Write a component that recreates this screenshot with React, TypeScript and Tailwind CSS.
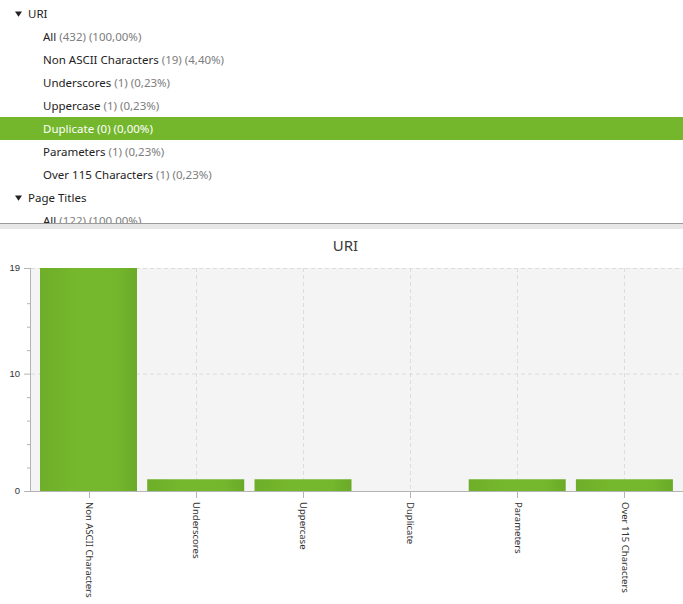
import React from "react";

const rows: { name: string; rest: string; sel?: boolean }[] = [
  { name: "All", rest: " (432) (100,00%)" },
  { name: "Non ASCII Characters", rest: " (19) (4,40%)" },
  { name: "Underscores", rest: " (1) (0,23%)" },
  { name: "Uppercase", rest: " (1) (0,23%)" },
  { name: "Duplicate", rest: " (0) (0,00%)", sel: true },
  { name: "Parameters", rest: " (1) (0,23%)" },
  { name: "Over 115 Characters", rest: " (1) (0,23%)" },
];

const cats = [
  { label: "Non ASCII Characters", v: 19 },
  { label: "Underscores", v: 1 },
  { label: "Uppercase", v: 1 },
  { label: "Duplicate", v: 0 },
  { label: "Parameters", v: 1 },
  { label: "Over 115 Characters", v: 1 },
];

function Group({ title }: { title: string }) {
  return (
    <div className="flex h-[23px] items-center pl-[15px] text-[#222]">
      <svg width="7" height="6" viewBox="0 0 7 6" className="mr-[6px]">
        <path d="M0 0.5 L7 0.5 L3.5 5.8 Z" fill="#222" />
      </svg>
      <span>{title}</span>
    </div>
  );
}

export default function App() {
  const top = 7;
  const bottom = 230;
  const unit = (bottom - top) / 19;
  const y = (v: number) => bottom - v * unit;
  const centers = [88.5, 195.7, 303, 410, 517.2, 624.4];
  const minor = [2, 4, 6, 8, 12, 14, 16];
  return (
    <div
      className="w-[683px] h-[604px] bg-white overflow-hidden flex flex-col"
      style={{ fontFamily: '"Noto Sans", "Open Sans", sans-serif' }}
    >
      <div className="h-[223px] overflow-hidden pt-[2px] text-[11.5px] leading-none">
        <Group title="URI" />
        {rows.map((r) => (
          <div
            key={r.name}
            className={
              "flex h-[23px] items-center pl-[43px] whitespace-pre " +
              (r.sel ? "bg-[#74b72d] text-white" : "text-[#222]")
            }
          >
            <span>{r.name}</span>
            <span className={r.sel ? "text-white" : "text-[#7d7d7d]"}>{r.rest}</span>
          </div>
        ))}
        <Group title="Page Titles" />
        <div className="flex h-[23px] items-center pl-[43px] whitespace-pre text-[#222]">
          <span>All</span>
          <span className="text-[#7d7d7d]"> (122) (100,00%)</span>
        </div>
      </div>
      <div className="h-[6px] border-t border-[#9a9a9a] bg-[#e6e6e6]" />
      <div className="flex-1 flex flex-col">
        <div className="h-[32px] flex items-center justify-center pl-[8px] text-[15px] text-[#3a3a3a]">
          URI
        </div>
        <svg width="683" height="343" className="block">
          <defs>
            <linearGradient id="barg" x1="0" x2="1" y1="0" y2="0">
              <stop offset="0" stopColor="#6eae29" />
              <stop offset="0.4" stopColor="#76b82d" />
              <stop offset="0.8" stopColor="#74b62c" />
              <stop offset="1" stopColor="#6aaa28" />
            </linearGradient>
          </defs>
          <rect x="31" y={top} width="652" height={bottom - top} fill="#f4f4f4" />
          {[19, 10].map((v) => (
            <line
              key={v}
              x1="31"
              x2="683"
              y1={y(v) + 0.5}
              y2={y(v) + 0.5}
              stroke="#dcdcdc"
              strokeDasharray="4 3"
            />
          ))}
          {centers.map((c) => (
            <line
              key={c}
              x1={Math.round(c) + 0.5}
              x2={Math.round(c) + 0.5}
              y1={top}
              y2={bottom}
              stroke="#dcdcdc"
              strokeDasharray="4 3"
            />
          ))}
          {cats.map((c, i) =>
            c.v > 0 ? (
              <rect
                key={c.label}
                x={centers[i] - 48.5}
                y={y(c.v)}
                width="97"
                height={c.v * unit}
                fill="url(#barg)"
              />
            ) : null
          )}
          <line x1="30.5" x2="30.5" y1={top} y2={bottom + 1} stroke="#b4b4b4" />
          <line x1="30" x2="683" y1={bottom + 0.5} y2={bottom + 0.5} stroke="#b4b4b4" />
          {[0, 10, 19].map((v) => (
            <g key={v}>
              <line x1="24" x2="30" y1={y(v) + 0.5} y2={y(v) + 0.5} stroke="#b4b4b4" />
              <text
                x="20"
                y={y(v) + 0.5}
                textAnchor="end"
                dominantBaseline="middle"
                fontSize="9.5"
                fill="#333"
                fontFamily='"Liberation Sans", Arial, sans-serif'
              >
                {v}
              </text>
            </g>
          ))}
          {minor.map((v) => (
            <line key={v} x1="27" x2="30" y1={y(v) + 0.5} y2={y(v) + 0.5} stroke="#b4b4b4" />
          ))}
          {cats.map((c, i) => (
            <g key={c.label}>
              <line
                x1={Math.round(centers[i]) + 0.5}
                x2={Math.round(centers[i]) + 0.5}
                y1={bottom}
                y2={bottom + 7}
                stroke="#b4b4b4"
              />
              <text
                transform={`translate(${centers[i]}, ${bottom + 11}) rotate(90)`}
                dominantBaseline="middle"
                fontSize="9.5"
                fill="#333"
                fontFamily='"Noto Sans", "Open Sans", sans-serif'
              >
                {c.label}
              </text>
            </g>
          ))}
        </svg>
      </div>
    </div>
  );
}
